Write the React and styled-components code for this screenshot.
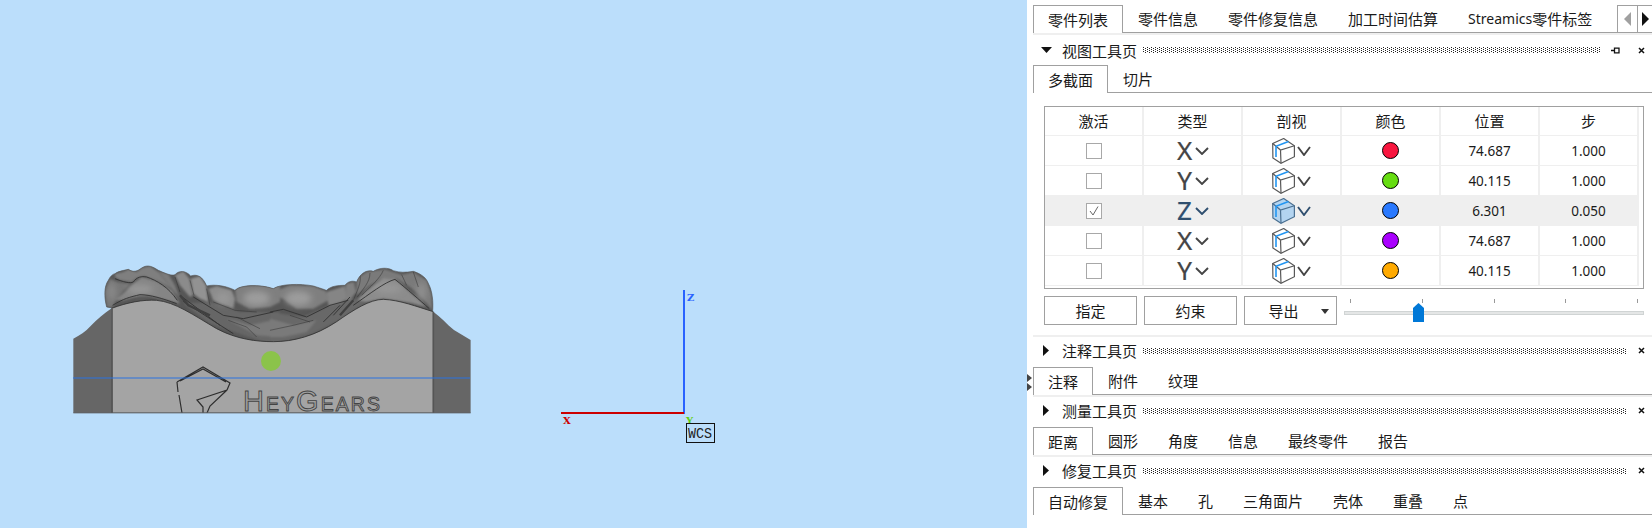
import React from 'react';
import styled, { createGlobalStyle } from 'styled-components';

const GlobalStyle = createGlobalStyle`
  html, body { margin: 0; padding: 0; background: #fff; overflow: hidden; }
  body { font-family: "Noto Sans", "Noto Sans CJK SC", sans-serif; font-size: 15px; color: #1a1a1a; }
`;

const Page = styled.div`
  display: flex;
  width: 1652px;
  height: 528px;
`;

const Viewport = styled.div`
  flex: 0 0 1027px;
  background: #bbdefb;
`;

const Scene = styled.svg`
  display: block;
  width: 1027px;
  height: 528px;
`;

const Panel = styled.div`
  position: relative;
  flex: 1;
  padding: 5px 0 0 6px;
  background: #fff;
`;

const Handle = styled.svg`
  position: absolute;
  left: 0;
  top: 374px;
`;

const TabBar = styled.div`
  position: relative;
  display: flex;
  height: 27px;
  border-bottom: 1px solid #a0a0a0;
`;

const Tab = styled.div`
  display: flex;
  align-items: center;
  height: ${(p) => (p.$active ? '28px' : '27px')};
  padding: 0 ${(p) => (p.$active ? '14px' : '15px')};
  box-sizing: border-box;
  white-space: nowrap;
  background: #fff;
  ${(p) => p.$active && `
    border: 1px solid #a0a0a0;
    border-bottom: 0;
  `}
`;

const Latin = styled.span`
  font-size: 14px;
`;

const TabNav = styled.div`
  position: absolute;
  left: 584px;
  right: 0;
  top: 0;
  height: 27px;
  display: grid;
  grid-template-columns: 19px 1fr;
  background: #fff;
  border-left: 1px solid #a0a0a0;
  border-top: 1px solid #a0a0a0;
  box-sizing: border-box;
`;

const NavCell = styled.div`
  display: flex;
  align-items: center;
  justify-content: center;
  & + & { border-left: 1px solid #a0a0a0; }
`;

const Strip = styled.div`
  height: 2px;
  background: #efefef;
`;

const SectionHeader = styled.div`
  display: flex;
  align-items: center;
  height: 30px;
  padding: 0 7px ${(p) => (p.$open ? '0' : '3px')} 8px;
  box-sizing: border-box;
`;

const Arrow = styled.svg`
  flex: 0 0 11px;
  margin-right: 10px;
`;

const Grip = styled.div`
  flex: 1;
  height: 6px;
  margin: 0 0 0 6px;
  background:
    radial-gradient(circle at 0.5px 0.5px, #222 0.6px, transparent 0.7px) 0 0 / 4px 2px,
    radial-gradient(circle at 2.5px 0.5px, #222 0.6px, transparent 0.7px) 0 1px / 4px 2px;
`;

const HeaderIcons = styled.div`
  display: flex;
  align-items: center;
  margin-left: 12px;
  gap: 18px;
`;

const PinIcon = styled.svg`
  margin-left: -1px;
`;

const Table = styled.div`
  margin: 13px 0 0 11px;
  width: 600px;
  height: 183px;
  box-sizing: border-box;
  border: 1px solid #a0a0a0;
`;

const Row = styled.div`
  display: grid;
  grid-template-columns: repeat(6, 99px);
  height: ${(p) => (p.$head ? '29px' : '30px')};
  box-sizing: border-box;
  border-bottom: 1px solid #efefef;
  background: ${(p) => (p.$active ? '#efefef' : 'transparent')};
  width: 594px;
`;

const Cell = styled.div`
  display: flex;
  align-items: center;
  justify-content: center;
  border-right: 2px solid #efefef;
  font-size: ${(p) => (p.$num ? '13.5px' : '15px')};
  padding-bottom: ${(p) => (p.$head ? '1px' : '0')};
`;

const Check = styled.div`
  display: flex;
  align-items: center;
  justify-content: center;
  width: 14px;
  height: 14px;
  border: 1px solid #a8a8a8;
  background: #fff;
  box-sizing: content-box;
`;

const AxisLetter = styled.span`
  font-size: 26px;
  line-height: 1;
  width: 16px;
  text-align: center;
  color: ${(p) => (p.$active ? '#2f4f6f' : '#454545')};
  -webkit-text-stroke: 0.2px currentColor;
  margin-bottom: 2px;
`;

const Chevron = styled.svg`
  margin-left: 2px;
`;

const Swatch = styled.div`
  width: 15px;
  height: 15px;
  border: 1px solid #000;
  border-radius: 50%;
  background: ${(p) => p.$color};
`;

const Controls = styled.div`
  display: flex;
  margin: 7px 0 0 11px;
  gap: 7px;
  height: 29px;
`;

const Button = styled.div`
  display: flex;
  align-items: center;
  justify-content: center;
  position: relative;
  width: 93px;
  height: 29px;
  box-sizing: border-box;
  border: 1px solid #a0a0a0;
  padding-right: ${(p) => (p.$menu ? '14px' : '0')};
`;

const Caret = styled.svg`
  position: absolute;
  right: 7px;
  top: 12px;
`;

const Slider = styled.div`
  position: relative;
  flex: 0 0 300px;
`;

const Ticks = styled.div`
  display: flex;
  justify-content: space-between;
  padding: 3px 6px 0;
`;

const Tick = styled.i`
  display: block;
  width: 1px;
  height: 4px;
  background: #999;
`;

const Track = styled.div`
  position: absolute;
  left: 0;
  right: 0;
  top: 15px;
  height: 4px;
  box-sizing: border-box;
  background: #e4e6e6;
  border: 1px solid #d0d4d4;
`;

const Thumb = styled.svg`
  position: absolute;
  left: 69px;
  top: 7px;
`;

const ViewSection = styled.div`
  height: 300px;
`;

const HeyText = styled.text`
  font-family: "Liberation Sans", sans-serif;
  font-size: 19.5px;
  fill: #a0a0a0;
  stroke: #444;
  stroke-width: 0.9;
`;

const AxisLabel = styled.text`
  font-family: "DejaVu Serif", serif;
  font-weight: bold;
  font-size: 10px;
`;

const WcsText = styled.text`
  font-family: "Liberation Mono", monospace;
  font-size: 15px;
  fill: #222;
`;

const archOutline = 'M140 171 C132 140 132 110 145 91 C150 80 158 72 165 71 C178 62 190 62 205 58 C220 68 232 64 245 54 C258 46 270 44 295 61 C320 72 335 78 345 74 C358 60 378 62 392 78 C405 74 425 72 440 108 C465 102 500 108 525 121 C540 104 600 102 640 116 C660 102 720 100 760 108 C780 114 790 118 800 121 C812 108 835 106 855 106 C865 92 880 92 890 96 C900 70 920 58 940 64 C960 52 985 52 1000 62 C1020 68 1035 68 1060 64 C1085 72 1100 85 1105 100 C1118 125 1120 155 1118 184 L1000 200 L640 290 L300 200 Z';

function ChevronDown({ color, big }) {
  return (
    <Chevron width="14" height={big ? 10 : 8} viewBox={big ? '0 0 14 10' : '0 0 14 8'}>
      <path d={big ? 'M1 1 L7 9 L13 1' : 'M1 1 L7 7 L13 1'} fill="none" stroke={color} strokeWidth="1.9" />
    </Chevron>
  );
}

function CubeIcon({ active }) {
  const line = active ? '#4a6f90' : '#585858';
  return (
    <svg width="23" height="26" viewBox="0 0 23 26">
      <path d="M.7 5.5 L11.7 .5 L22.4 7.7 V18.7 L9 25.3 L.9 20 Z" fill={active ? '#b3d4f0' : '#fff'} stroke={line} strokeWidth="1.2" />
      <path d="M.7 5.5 L8.5 12 L22.4 7.7 M8.5 12 L9 25.3" fill="none" stroke={line} strokeWidth="1.2" />
      <path d="M4 19 V8.2 L16.5 3.4" fill="none" stroke="#2196f3" strokeWidth="1.6" />
    </svg>
  );
}

const rows = [
  { axis: 'X', color: '#f9163f', pos: '74.687', step: '1.000' },
  { axis: 'Y', color: '#66dd11', pos: '40.115', step: '1.000' },
  { axis: 'Z', color: '#2979ff', pos: '6.301', step: '0.050', active: true },
  { axis: 'X', color: '#aa00ff', pos: '74.687', step: '1.000' },
  { axis: 'Y', color: '#ffaa00', pos: '40.115', step: '1.000' },
];

const heads = ['激活', '类型', '剖视', '颜色', '位置', '步'];

function Tabs({ items }) {
  return (
    <TabBar>
      {items.map((t, i) => (
        <Tab key={t} $active={i === 0}>{t}</Tab>
      ))}
    </TabBar>
  );
}

function Header({ title, open, pin }) {
  return (
    <SectionHeader $open={open}>
      <Arrow width="11" height="11" viewBox="0 0 11 11">
        {open ? <path d="M0 2 H11 L5.5 8 Z" fill="#111" /> : <path d="M2 0 L8 5.5 L2 11 Z" fill="#111" />}
      </Arrow>
      {title}
      <Grip />
      <HeaderIcons>
        {pin && (
          <PinIcon width="9" height="7" viewBox="0 0 9 7">
            <path d="M0 3.5 H3 M3.5 .5 V6.5 M3.5 1.2 H8 V5.8 H3.5" fill="none" stroke="#111" strokeWidth="1.3" />
          </PinIcon>
        )}
        <svg width="7" height="7" viewBox="0 0 7 7">
          <path d="M1 1 L6 6 M6 1 L1 6" stroke="#111" strokeWidth="1.5" />
        </svg>
      </HeaderIcons>
    </SectionHeader>
  );
}

function Model() {
  return (
    <Scene viewBox="0 0 1027 528">
      <defs>
        <filter id="soft" x="-10%" y="-10%" width="120%" height="120%"><feGaussianBlur stdDeviation="3" /></filter>
        <filter id="softer" x="-30%" y="-30%" width="160%" height="160%"><feGaussianBlur stdDeviation="9" /></filter>
        <clipPath id="arch"><path d={archOutline} /></clipPath>
        <clipPath id="base-clip"><rect x="60" y="250" width="420" height="162.5" /></clipPath>
      </defs>

      <g transform="translate(60 250) scale(0.3333)">
        {/* dentition, shaded blobs clipped to the arch outline */}
        <g clipPath="url(#arch)">
          <rect x="120" y="40" width="1020" height="260" fill="#565656" />
          <g filter="url(#soft)">
            <g transform="translate(120 36)">
              <path d="M20 135 L15 90 L30 50 L50 60 L90 65 L50 110 L38 135 Z" fill="#767676" />
              <path d="M45 35 L70 30 L85 22 L110 30 L125 18 L150 12 L175 30 L215 80 L175 58 L130 42 L110 48 L95 60 L60 55 L45 45 Z" fill="#7f7f7f" />
              <path d="M45 115 L80 85 L100 65 L125 45 L170 58 L215 85 L240 125 L200 115 L140 100 L120 100 L70 115 Z" fill="#858585" />
              <path d="M175 28 L205 35 L225 70 L240 110 L215 80 Z" fill="#7b7b7b" />
              <path d="M225 40 L250 28 L268 50 L278 100 L270 105 L240 70 Z" fill="#8b8b8b" />
              <path d="M272 50 L300 42 L318 70 L325 120 L300 110 L280 95 Z" fill="#929292" />
              <path d="M325 80 L350 72 L395 85 L405 110 L400 140 L340 115 Z" fill="#8c8c8c" />
              <path d="M405 85 L420 72 L480 70 L540 72 L540 120 L510 135 L450 140 L410 120 Z" fill="#7f7f7f" />
              <path d="M250 125 L330 120 L420 150 L540 150 L540 245 L490 240 L330 185 Z" fill="#666" />
              <path d="M380 170 L450 190 L540 170 L540 225 L470 220 Z" fill="#7a7a7a" />
            </g>
            <g transform="translate(630 36)">
              <path d="M0 70 L30 82 L60 70 L130 72 L168 88 L175 115 L130 140 L80 140 L40 110 L0 100 Z" fill="#7f7f7f" />
              <path d="M170 90 L225 72 L230 110 L200 130 L175 130 Z" fill="#858585" />
              <path d="M228 65 L252 60 L258 90 L240 115 L225 125 Z" fill="#808080" />
              <path d="M260 50 L290 30 L345 22 L395 38 L430 30 L470 55 L485 100 L487 145 L450 100 L420 75 L380 50 L340 48 L300 70 L260 100 Z" fill="#7a7a7a" />
              <path d="M250 125 L290 85 L340 48 L375 50 L420 90 L470 135 L420 122 L340 110 L290 120 Z" fill="#8c8c8c" />
              <path d="M0 150 L100 165 L180 130 L250 110 L290 120 L200 180 L130 215 L40 240 L0 240 Z" fill="#686868" />
              <path d="M0 170 L70 190 L140 175 L110 210 L40 225 L0 225 Z" fill="#7a7a7a" />
            </g>
          </g>
          <g filter="url(#softer)">
            <ellipse cx="590" cy="145" rx="40" ry="22" fill="#9c9c9c" />
            <ellipse cx="715" cy="145" rx="40" ry="22" fill="#9c9c9c" />
            <ellipse cx="490" cy="145" rx="22" ry="18" fill="#989898" />
            <ellipse cx="240" cy="118" rx="40" ry="12" fill="#999" />
            <ellipse cx="985" cy="115" rx="40" ry="12" fill="#999" />
            <ellipse cx="1085" cy="125" rx="14" ry="30" fill="#8f8f8f" />
            <ellipse cx="155" cy="125" rx="12" ry="28" fill="#8a8a8a" />
          </g>
          {/* creases */}
          <g transform="translate(120 36)" fill="none" stroke="#343434" strokeWidth="2.8">
            <path d="M38 130 C70 110 90 105 120 98 C150 98 190 110 230 125" />
            <path d="M45 50 C70 60 90 65 100 60 C110 45 125 42 140 45 C170 55 205 75 232 115" />
            <path d="M240 100 L300 145 L360 190 M250 118 L330 170 L400 215 M280 105 L370 160 L430 170 L520 150" />
            <path d="M225 45 L240 90 M270 55 L282 100 M320 80 L330 130" strokeWidth="1.6" />
            <path d="M340 120 L405 145 L470 150 M385 175 L440 195 L470 225 M410 165 L480 200" strokeWidth="1.6" />
            <path d="M240 100 L265 130 L330 160" strokeWidth="7" stroke="#404040" />
          </g>
          <g transform="translate(630 36)" fill="none" stroke="#343434" strokeWidth="2.8">
            <path d="M250 130 C300 95 345 60 375 52 C410 80 450 115 478 140" />
            <path d="M270 40 C275 60 262 85 250 115 M300 33 C300 60 280 80 262 105 M340 25 C330 50 300 75 275 100" strokeWidth="1.6" />
            <path d="M0 150 L40 142 L110 165 L180 130 L235 115 M210 130 L160 180 M240 105 L190 160" />
            <path d="M0 205 L70 190 L130 175 M60 160 L120 180" strokeWidth="1.6" />
            <path d="M250 115 L210 160" strokeWidth="7" stroke="#404040" />
            <path d="M395 38 L410 70 M430 30 L445 75" strokeWidth="1.6" />
          </g>
        </g>
        <path d={archOutline} fill="none" stroke="#5a5a5a" strokeWidth="2" />

        {/* base */}
        <path d="M155 175 C200 158 250 148 290 151 C345 156 400 195 470 236 C530 268 590 275 640 275 C700 275 765 258 830 215 C880 180 930 148 970 148 C1020 150 1070 170 1120 185 L1120 488 L155 488 Z" fill="#a4a4a4" />
        <path d="M155 175 C200 158 250 148 290 151 C345 156 400 195 470 236 C530 268 590 275 640 275 C700 275 765 258 830 215 C880 180 930 148 970 148 C1020 150 1070 170 1120 185" fill="none" stroke="#303030" strokeWidth="2.5" />
        <path d="M40 266 C60 256 76 245 92 228 C112 208 132 190 155 175 L158 488 L40 488 Z" fill="#666" />
        <path d="M1120 185 C1142 200 1160 222 1182 240 L1232 270 L1232 488 L1120 488 Z" fill="#666" />
        <path d="M156 175 V488 M1120 185 V488" stroke="#555" strokeWidth="5" />
        <path d="M40 488.5 H1232" stroke="#555" strokeWidth="3" />
        <circle cx="633" cy="333" r="30" fill="#8bc34a" />
      </g>

      {/* logo cut into the base */}
      <g clipPath="url(#base-clip)">
        <path d="M177 382 L203 367 L230 383 L227 390 L197 400 L203 407 V413 M207 413 L210 406 L227 390 M177 382 L178 392 M179 395 L182 413 M180 381 L203 369 L226 382" fill="none" stroke="#2e2e2e" strokeWidth="1.2" />
        <HeyText x="243" y="411" textLength="137">
          <tspan fontSize="29">H</tspan>EY<tspan fontSize="29">G</tspan>EARS
        </HeyText>
      </g>

      <path d="M73 378 H470" stroke="#2a72e0" strokeWidth="1" />

      {/* world axes */}
      <path d="M684 290 V414" stroke="#2962ff" strokeWidth="2" />
      <path d="M561 413 H684" stroke="#cc0000" strokeWidth="2" />
      <AxisLabel x="687" y="301" fill="#2962ff">Z</AxisLabel>
      <AxisLabel x="563" y="424" fill="#cc0000">X</AxisLabel>
      <AxisLabel x="686" y="424" fill="#5fcf10">Y</AxisLabel>
      <rect x="686.500" y="423.500" width="28" height="19" fill="#bbdefb" stroke="#111" />
      <WcsText x="688" y="438" textLength="24" lengthAdjust="spacingAndGlyphs">WCS</WcsText>
    </Scene>
  );
}

export default function App() {
  return (
    <Page>
      <GlobalStyle />
      <Viewport><Model /></Viewport>
      <Panel>
        <Handle width="6" height="17" viewBox="0 0 6 17">
          <path d="M0 0 L5 4 L0 8 Z M0 9 L5 13 L0 17 Z" fill="#444" />
        </Handle>
        <TabBar>
          {['零件列表', '零件信息', '零件修复信息', '加工时间估算'].map((t, i) => (
            <Tab key={t} $active={i === 0}>{t}</Tab>
          ))}
          <Tab><Latin>Streamics</Latin>零件标签</Tab>
          <TabNav>
            <NavCell>
              <svg width="7" height="14" viewBox="0 0 7 14"><path d="M7 0 V14 L0 7 Z" fill="#a0a0a0" /></svg>
            </NavCell>
            <NavCell>
              <svg width="7" height="14" viewBox="0 0 7 14"><path d="M0 0 V14 L7 7 Z" fill="#111" /></svg>
            </NavCell>
          </TabNav>
        </TabBar>
        <Strip />
        <ViewSection>
          <Header title="视图工具页" open pin />
          <Tabs items={['多截面', '切片']} />
          <Table>
            <Row $head>
              {heads.map((h) => <Cell key={h} $head>{h}</Cell>)}
            </Row>
            {rows.map((r, i) => (
              <Row key={i} $active={r.active}>
                <Cell>
                  <Check>
                    {r.active && (
                      <svg width="12" height="12" viewBox="0 0 12 12">
                        <path d="M2 6 L5 10 L10 1.500" fill="none" stroke="#666" strokeWidth="1" />
                      </svg>
                    )}
                  </Check>
                </Cell>
                <Cell>
                  <AxisLetter $active={r.active}>{r.axis}</AxisLetter>
                  <ChevronDown color={r.active ? '#2f4f6f' : '#454545'} />
                </Cell>
                <Cell>
                  <CubeIcon active={r.active} />
                  <ChevronDown big color={r.active ? '#2f4f6f' : '#454545'} />
                </Cell>
                <Cell><Swatch $color={r.color} /></Cell>
                <Cell $num>{r.pos}</Cell>
                <Cell $num>{r.step}</Cell>
              </Row>
            ))}
          </Table>
          <Controls>
            <Button>指定</Button>
            <Button>约束</Button>
            <Button $menu>
              导出
              <Caret width="8" height="5" viewBox="0 0 8 5"><path d="M0 0 H8 L4 5 Z" fill="#333" /></Caret>
            </Button>
            <Slider>
              <Ticks>{[0, 1, 2, 3, 4].map((t) => <Tick key={t} />)}</Ticks>
              <Track />
              <Thumb width="11" height="19" viewBox="0 0 11 19"><path d="M0 5 L5.500 0 L11 5 V19 H0 Z" fill="#0078d7" /></Thumb>
            </Slider>
          </Controls>
        </ViewSection>
        <Strip />
        <Header title="注释工具页" />
        <Tabs items={['注释', '附件', '纹理']} />
        <Strip />
        <Header title="测量工具页" />
        <Tabs items={['距离', '圆形', '角度', '信息', '最终零件', '报告']} />
        <Strip />
        <Header title="修复工具页" />
        <Tabs items={['自动修复', '基本', '孔', '三角面片', '壳体', '重叠', '点']} />
      </Panel>
    </Page>
  );
}
